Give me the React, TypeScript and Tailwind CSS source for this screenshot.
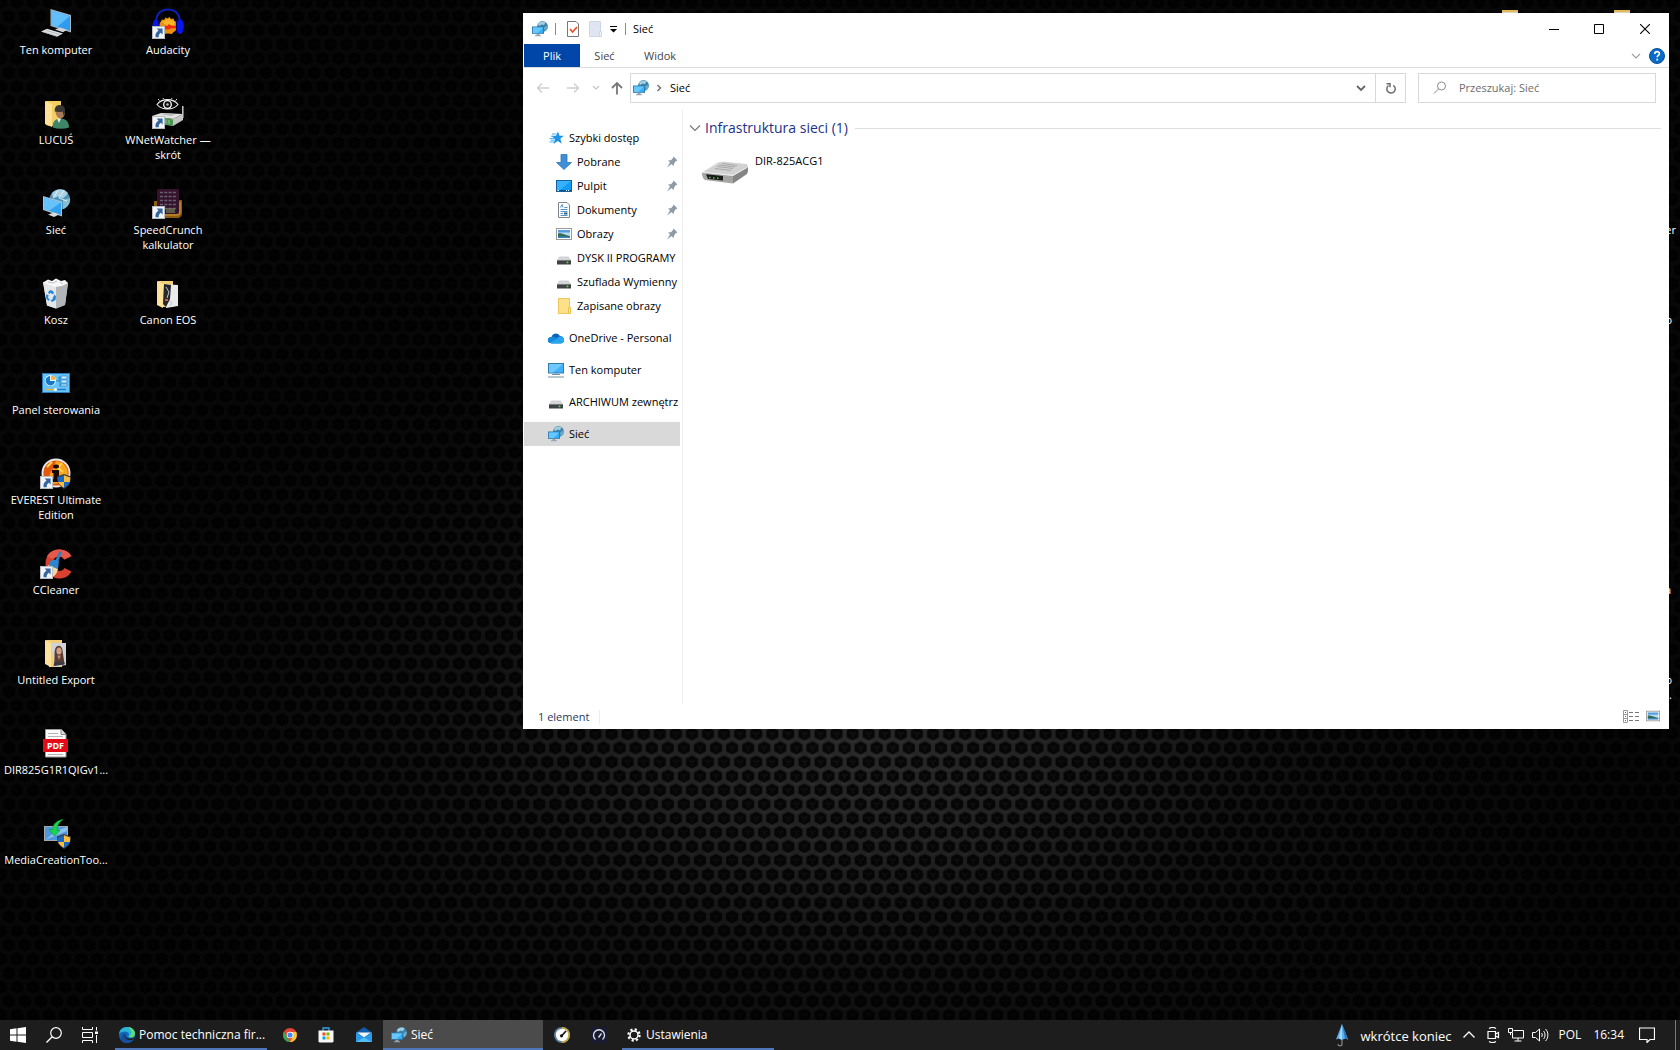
import React from "react";

type Art = { className?: string };

/* ---------- shared drawings ---------- */

function ShortcutArrow() {
  return (
    <g>
      <rect x="0.5" y="18.5" width="12" height="12" fill="#f2f4f7" stroke="#b9bcc2" />
      <path d="M4.6 20.6h6v6l-1.9-1.8c-1.6 1.2-2.2 2.6-1.9 4.4H3.6c-.6-2.7.4-5 2.9-6.7z" fill="#33669f" />
    </g>
  );
}

function Shield() {
  return (
    <g>
      <path d="M24 16l7 2.6c0 6-2 9.6-7 12.4-5-2.8-7-6.400-7-12.400z" fill="#3b3f46" />
      <path d="M24 17.300v6.700h-5.900c-.2-1.400-.3-3-.2-4.500z" fill="#1869c4" />
      <path d="M24 17.300l6.100 2.200c.1 1.500 0 3.100-.3 4.500H24z" fill="#fbbd3a" />
      <path d="M18.100 24H24v5.700c-3.200-1.600-5-3.400-5.900-5.700z" fill="#fbbd3a" />
      <path d="M24 24h5.800c-.8 2.300-2.600 4.100-5.800 5.700z" fill="#1869c4" />
    </g>
  );
}

function NetworkIcon({ className = "size-4" }: Art) {
  return (
    <svg viewBox="0 0 16 16" className={className} aria-hidden="true">
      <circle cx="10.500" cy="5.500" r="5.400" fill="#3f84ad" />
      <path d="M6 3c1.500-2.400 5.300-3.300 7.500-1.700L12 4 9.500 3.500 7 5z" fill="#a4d0e2" />
      <path d="M12 6.500l3.600-2c.6 2.400-.8 4.900-2.600 5.900z" fill="#6caccb" />
      <path d="M0 5.500h12v7.300H0z" fill="#2f76a5" />
      <path d="M.9 6.400h10.200v5.500H.9z" fill="#35b1fa" />
      <path d="M.9 6.400h10.200l-5.600 5.500H.9z" fill="#67c8ff" />
      <path d="M4.500 12.800h3v1.500h-3zM3 14.300h6v1H3z" fill="#8fa5b5" />
    </svg>
  );
}

function PictureIcon({ className = "size-4" }: Art) {
  return (
    <svg viewBox="0 0 16 16" className={className} aria-hidden="true">
      <rect x="0.500" y="2.500" width="15" height="11" fill="#fff" stroke="#9a9a9a" />
      <rect x="2" y="4" width="12" height="8" fill="#b9dcf5" />
      <path d="M2 4h12v2.500H2z" fill="#5a9ee2" />
      <path d="M2 7.500c3-.8 5 .8 12 2.500v1H2z" fill="#2f6d57" />
      <path d="M2 10.500h12V12H2z" fill="#3f82bc" />
    </svg>
  );
}

function DriveIcon() {
  return (
    <svg viewBox="0 0 16 16" className="size-4" aria-hidden="true">
      <path d="M3.500 6.500h9L15 10H1z" fill="#d2d4d6" />
      <path d="M1 10h14v4.500H1z" fill="#3f4243" />
      <path d="M1 10h14v.8H1z" fill="#84888a" />
      <circle cx="11.500" cy="12.400" r="0.900" fill="#3ff047" />
    </svg>
  );
}

/* ---------- desktop icons, 32px ---------- */

function Big({ children }: { children: React.ReactNode }) {
  return (
    <svg viewBox="0 0 32 32" className="size-8 shrink-0" aria-hidden="true">
      {children}
    </svg>
  );
}

const ComputerArt = () => (
  <Big>
    <path d="M10.500 1l20.500 6v17.500L10.500 18z" fill="#a9b4bd" />
    <path d="M11.500 2.500L30 7.900v14.900l-18.500-5.600z" fill="#2d9bf0" />
    <path d="M11.500 2.500L30 7.900 17 18.900l-5.500-1.700z" fill="#62bdfb" />
    <path d="M15 21.500l5-2 7 2.300-4 2.500z" fill="#cfd4d8" />
    <path d="M1 23.500l6-2.700L23 25.500l-6 3.300z" fill="#dfe2e5" />
    <path d="M3 24l14 4M6 22.500l14 4" stroke="#a4a9ad" strokeWidth="0.700" />
  </Big>
);

const AudacityArt = () => (
  <Big>
    <path d="M6.500 17l2-3 1.500-2.500 2 .5 1.500-2.500 2 1 2-1.500 1.500 2 2.500-.5 1 2.500 2.500 1v6l-1.500 3-2 1-1.500 2-4-.5-4 .5-3-2z" fill="#e8920f" />
    <path d="M10 14l6-3 6 2 1 4-7 2z" fill="#fbb52a" />
    <path d="M10 19l3-1.500 2 .5 2-2 2 1.500 5 .5v2l-5 .5-3 1-4-.5z" fill="#f22b0c" />
    <path d="M4.500 16C3 6 9 1.500 16 1.500S29 6 27.500 16" fill="none" stroke="#0b1fb8" strokeWidth="2" />
    <ellipse cx="3.800" cy="18.500" rx="3.300" ry="7" fill="#0a16e6" />
    <ellipse cx="28.200" cy="18.500" rx="3.600" ry="7.500" fill="#0a16e6" />
    <path d="M7 12v13M24.500 12v13" stroke="#050a70" strokeWidth="1.200" />
    <ShortcutArrow />
  </Big>
);

const UserFolderArt = () => (
  <Big>
    <path d="M6 3h15v25H10l-4-1z" fill="#f4cd63" />
    <path d="M5 3l7 3v23l-7-3z" fill="#fde196" />
    <path d="M12.500 29.500c0-6 3-9 8-9s8.500 3 8.500 9c-5 1.600-11 1.600-16.500 0z" fill="#3f8668" />
    <path d="M17 20.500l2 4.500 2-4.500z" fill="#e9eee9" />
    <path d="M15.500 13c0-3 2-4 4.500-4s5 1.500 5 5-2 6.500-4.500 6.500-5-3-5-7.500z" fill="#a87a58" />
    <path d="M14.800 13.500c-.5-4.500 2-6.500 5-6.500 4 0 6 3 5.200 7.500-.3 1.500-.8 2.500-1.500 3l-1-4c-2.500.8-5.200.5-7.700 0z" fill="#3a3634" />
  </Big>
);

const WNetArt = () => (
  <Big>
    <path d="M5 6.500c5-6.500 16-6.500 21 0-5 6-16 6-21 0z" fill="#0b0b0b" stroke="#f4f4f4" strokeWidth="1.100" />
    <circle cx="15.500" cy="6.500" r="3.800" fill="none" stroke="#fff" strokeWidth="1.300" />
    <circle cx="15.500" cy="6.500" r="1.300" fill="#bbb" />
    <path d="M7.500 2.500L6 1M11.500 1L11 0M19.500 1l.5-1M23.500 2.500L25 1" stroke="#ddd" />
    <path d="M30.800 8v12" stroke="#d5d5d5" strokeWidth="1.400" />
    <path d="M0 18l9-3 22 1-10 5z" fill="#e2e2e2" />
    <path d="M8 16l4-.8 12 .8-5 2z" fill="#b8bdb8" />
    <path d="M0 18l21 3v7L0 25z" fill="#93a893" />
    <path d="M21 21l10-5v6l-10 6z" fill="#c4c7c4" />
    <path d="M12 20l9 1.500v6l-9-1z" fill="#4a9650" />
    <path d="M14 21.500v4M17 22v4" stroke="#a8d5a8" strokeWidth="0.800" />
    <ShortcutArrow />
  </Big>
);

const GlobeArt = () => (
  <Big>
    <circle cx="19.700" cy="11.500" r="10.300" fill="#4f93b7" />
    <path d="M12 5.500c5-6 13-5 16 0l-5 5-5-2-5 2z" fill="#a8d2e2" />
    <path d="M23 12l7-2c1 5-3 10-7 11z" fill="#86bdd4" />
    <path d="M18 2l-4 7M24 2l-5 8 8 3" stroke="#e6f4f8" strokeWidth="0.900" fill="none" />
    <path d="M3 8l19 5.500v15L3 22z" fill="#b0c3cf" />
    <path d="M4 9.400l17 5v12.500L4 21z" fill="#33a3ee" />
    <path d="M4 9.400l17 5L9 22.700 4 21z" fill="#67c1fa" />
    <path d="M8 26.500l6-2 5 2-5 2.500z" fill="#d8dcdf" />
  </Big>
);

const SpeedCrunchArt = () => (
  <Big>
    <path d="M2 13l28-1v13c0 3-2 5-5 5H8c-4 0-6-2-6-5z" fill="#8e5d14" />
    <path d="M28 14v9c0 3-1 4-4 4H13" fill="none" stroke="#c18a2a" strokeWidth="1.500" />
    <rect x="5" y="1" width="22" height="25" rx="2" fill="#35132a" />
    <path d="M8 4.500h16M8 8.500h16M8 12.500h16M8 16.500h16M8 20.500h16" stroke="#675f78" strokeWidth="1.300" strokeDasharray="3 1.300" />
    <path d="M14 20h9v5h-9z" fill="#6d7758" opacity="0.700" />
    <ShortcutArrow />
  </Big>
);

const BinArt = () => (
  <Big>
    <path d="M3 4l25 1-3 22-9 3.500-9-3z" fill="#c9cccf" />
    <path d="M3 4l13 3v23.500L7 27.500z" fill="#e4e6e8" />
    <path d="M16 7l12-2-3 22-9 3.500z" fill="#b1b5b8" />
    <path d="M3 4.500l5-3 4 1.500 4-2.500 5 2.500 4-1 3 3-6 3-7 1z" fill="#f7f7f7" />
    <path d="M8 4l5 1 4-2M20 4l3 2" stroke="#bfc2c5" fill="none" />
    <path d="M8 14.500l2-2.500 3 1 1 2.500-2 .5-1.500-1.500-1 1.800zM6 16.500l2.500.5-.5 3 1.500 1-.5 2-2.700-2zM14.500 16.500l1.500 2-.5 3.500-3.500 2-1.500-2 2-.5.500-2z" fill="#1b84dc" />
  </Big>
);

const CanonArt = () => (
  <Big>
    <path d="M6 3h15v26H9z" fill="#f2cf77" />
    <path d="M11 6l15 1v21l-12 2z" fill="#e9eaec" />
    <path d="M12 6l7 1-1 14-4 8-3-3z" fill="#26282b" />
    <path d="M14 9l3 5-2 6M17 23l3 2-2 3" stroke="#bfc4c6" fill="none" />
    <path d="M13 21h3v2h-3z" fill="#d55545" />
    <path d="M5 3l6 3v24l-6-3z" fill="#fde29b" />
  </Big>
);

const PanelArt = () => (
  <Big>
    <rect x="2.500" y="5.500" width="27" height="19" fill="#66c4f9" stroke="#2a79ba" />
    <circle cx="10.500" cy="12.500" r="5.500" fill="#e8f6ff" />
    <path d="M10 8v5h5a4.700 4.700 0 1 1-5-5z" fill="#1578c8" />
    <path d="M11.200 7.500a4.500 4.500 0 0 1 4.300 4.300h-4.300z" fill="#f7ad2c" />
    <path d="M16 13h3V9h3M20 9.500v9" stroke="#2d82bf" fill="none" />
    <path d="M21 8h6v3h-6zM21 12h6v3h-6zM21 16h6v2h-6z" fill="#c9ebfd" stroke="#2d82bf" strokeWidth="0.700" />
    <path d="M6 21.500h9" stroke="#f7ad2c" strokeWidth="1.300" />
    <path d="M15 21.500h11" stroke="#1b77bd" strokeWidth="1.300" />
    <circle cx="15.500" cy="21.500" r="1.600" fill="#fff" />
  </Big>
);

const EverestArt = () => (
  <Big>
    <circle cx="16" cy="15" r="14.500" fill="#e9e9e9" />
    <circle cx="16" cy="15" r="12.600" fill="#e2580d" />
    <path d="M16 3a12 12 0 0 1 11 16l-7 6-8 1c-5-6-2-12 1-15z" fill="#f9a51c" />
    <path d="M12 4l-5 5M22 5l-4 5 5 4" stroke="#fcd55a" strokeWidth="2" fill="none" />
    <ellipse cx="16" cy="8.500" rx="3" ry="2" fill="#1d0904" />
    <path d="M12 12h7v9h2v3h-9v-3h1.500v-6H12z" fill="#1d0904" />
    <ShortcutArrow />
    <Shield />
  </Big>
);

const CCleanerArt = () => (
  <Big>
    <path d="M31.500 8A14 14 0 0 0 19 1.500C11 1.500 5.500 8 5.500 15.500S11 30.500 19 30.500c6 0 10-2.500 12.500-7l-7-3.500c-1 2-3 3-5 3-4 0-6.500-3-6.500-7.500s2.500-7 6.500-7c2.500 0 4 1 5 3z" fill="#d8402f" />
    <path d="M31.500 8A14 14 0 0 0 19 1.500c-6 0-10 3-12 7l6 2.500c1.500-2 3.500-2.700 6-2.600 2.500.1 4 1.100 5 3z" fill="#e6594a" />
    <path d="M19.500 3l2.500 1-4 10-3-1z" fill="#2f7ec0" />
    <path d="M9 15c3-4 6-4 10-2l-1 8-9-3z" fill="#2b86cf" />
    <path d="M8 17l10 4c-1 5-4 8-8 9-2-1-3-3-4-6z" fill="#f2d8a8" />
    <ShortcutArrow />
  </Big>
);

const ExportArt = () => (
  <Big>
    <path d="M6 2h16v27H9z" fill="#f2cf77" />
    <path d="M11 5h15v22l-12 2z" fill="#cfd2d6" />
    <path d="M15.500 10c2.500-4 6.500-2 7 2 .4 5 1.500 9 2 14l-11 1.500c2-6 0-12.500 2-17.500z" fill="#5b3b32" />
    <ellipse cx="19" cy="13" rx="2.600" ry="3.600" fill="#cf9f88" />
    <path d="M17 17.500l2 4.500 2-4.500z" fill="#b98673" />
    <path d="M14 25l4-1.500 6.500 1v2L14 28z" fill="#3a3a42" />
    <path d="M5 2l6 3v24l-6-3z" fill="#fde29b" />
  </Big>
);

const PdfArt = () => (
  <Big>
    <path d="M5.500 1.500h16l4.500 5v22.500H5.500z" fill="#fafafa" stroke="#9b9b9b" />
    <path d="M21 1.500v5h5" fill="#dcdcdc" stroke="#8b8b8b" />
    <path d="M8 5.500h10M8 8.500h15M8 26.500h15" stroke="#b5b5b5" />
    <rect x="3" y="11" width="25" height="13" fill="#e30b17" />
    <text x="15.500" y="21" textAnchor="middle" fontSize="9" fontWeight="700" fill="#fff" fontFamily="Noto Sans, sans-serif">PDF</text>
  </Big>
);

const MediaArt = () => (
  <Big>
    <rect x="4.500" y="8.500" width="23" height="14" fill="#4f97dc" stroke="#a3a9ad" />
    <path d="M5 22l11-9 11-4v4z" fill="#8cc0ef" />
    <path d="M23 1.500c-5 .5-10 4-10.500 10H9l5.500 6.500 5.500-5.500h-3c0-5 2-8.500 6-11z" fill="#17d64d" stroke="#0d9a35" strokeWidth="0.600" />
    <Shield />
  </Big>
);

const desktopItems: { lines: string[]; Art: () => React.ReactElement }[] = [
  { lines: ["Ten komputer"], Art: ComputerArt },
  { lines: ["LUCUŚ"], Art: UserFolderArt },
  { lines: ["Sieć"], Art: GlobeArt },
  { lines: ["Kosz"], Art: BinArt },
  { lines: ["Panel sterowania"], Art: PanelArt },
  { lines: ["EVEREST Ultimate", "Edition"], Art: EverestArt },
  { lines: ["CCleaner"], Art: CCleanerArt },
  { lines: ["Untitled Export"], Art: ExportArt },
  { lines: ["DIR825G1R1QIGv1..."], Art: PdfArt },
  { lines: ["MediaCreationToo..."], Art: MediaArt },
  { lines: ["Audacity"], Art: AudacityArt },
  { lines: ["WNetWatcher —", "skrót"], Art: WNetArt },
  { lines: ["SpeedCrunch", "kalkulator"], Art: SpeedCrunchArt },
  { lines: ["Canon EOS"], Art: CanonArt },
];

/* ---------- wallpaper ---------- */

function Wallpaper() {
  return (
    <svg className="absolute inset-0 h-full w-full" aria-hidden="true">
      <defs>
        <pattern id="comb" x="708" y="762" width="16.070" height="28.140" patternUnits="userSpaceOnUse">
          <rect width="17" height="29" fill="#292929" />
          <g id="cell">
            <path d="M0-6.500L6-3.300V3.300L0 6.500-6 3.300V-3.300z" fill="#070707" />
            <path d="M-3-1.500L0 0l3-1.500M0 0v4" stroke="#161616" fill="none" />
          </g>
          <use href="#cell" x="16.070" />
          <use href="#cell" y="28.140" />
          <use href="#cell" x="16.070" y="28.140" />
          <use href="#cell" x="8.030" y="14.070" />
          <path d="M-3 7l3 1.500L3 7M13 7l3 1.500L19 7M5 21l3 1.500L11 21" stroke="#3a3a3a" fill="none" strokeWidth="0.800" />
        </pattern>
        <radialGradient id="dim" gradientUnits="userSpaceOnUse" cx="860" cy="1220" r="800" gradientTransform="scale(1 0.600)">
          <stop offset="0" stopColor="#000" stopOpacity="0" />
          <stop offset="0.250" stopColor="#000" stopOpacity="0.200" />
          <stop offset="0.500" stopColor="#000" stopOpacity="0.580" />
          <stop offset="0.750" stopColor="#000" stopOpacity="0.760" />
          <stop offset="1" stopColor="#000" stopOpacity="0.840" />
        </radialGradient>
      </defs>
      <rect width="100%" height="100%" fill="url(#comb)" />
      <rect width="100%" height="100%" fill="url(#dim)" />
    </svg>
  );
}

/* ---------- explorer window ---------- */

const Star = () => (
  <svg viewBox="0 0 16 16" className="size-4" aria-hidden="true">
    <path d="M10 1.500l1.500 4.200 4.300.1-3.500 3 1.400 4.900L9.800 11 5.500 14l1.500-5-3.500-3 4.600-.3z" fill="#1d95e6" />
    <path d="M4 4h4.500M1.500 8.500H7M1.500 12H6M3 6.200h3M2.500 10.200h4" stroke="#3aa8f0" strokeWidth="0.900" />
  </svg>
);
const Down = () => (
  <svg viewBox="0 0 16 16" className="size-4" aria-hidden="true">
    <path d="M5 .5h6v8h4.500L8 15.500.5 8.500H5z" fill="#3c8fd8" stroke="#2e79bb" strokeWidth="0.800" />
  </svg>
);
const DeskIcon = () => (
  <svg viewBox="0 0 16 16" className="size-4" aria-hidden="true">
    <rect x="0.500" y="2.500" width="15" height="11" fill="#139bf4" stroke="#17629c" />
    <path d="M1 3h14L4 12H1z" fill="#36b0ff" />
    <path d="M1 12.500h14" stroke="#0f4d80" />
    <path d="M1.500 12.500h1.500M10 12.500h1M12 12.500h1" stroke="#fff" />
  </svg>
);
const Doc = () => (
  <svg viewBox="0 0 16 16" className="size-4" aria-hidden="true">
    <path d="M2.500.5h8.500l2.500 2.500v12.500h-11z" fill="#fff" stroke="#7d868c" />
    <path d="M4.500 5.500l1.500-3 1 3M8.500 5.500h3M4.500 7.500h7M4.500 9.500h7M4.500 11.500h2.500M4.500 13.500h7" stroke="#3a86c6" fill="none" strokeWidth="0.900" />
    <path d="M8 10.500h3.500v2H8z" fill="#2a638f" />
  </svg>
);
const Folder = () => (
  <svg viewBox="0 0 16 16" className="size-4" aria-hidden="true">
    <rect x="2.500" y="0.500" width="11" height="15" fill="#ffe08a" stroke="#edc75c" />
    <path d="M12.500 9.500h2v6h-2z" fill="#ffe9ae" stroke="#e9c04e" />
  </svg>
);
const Cloud = () => (
  <svg viewBox="0 0 16 16" className="size-4" aria-hidden="true">
    <path d="M3.500 7C4.500 3 9.500 2 12 6c2.500 0 4 1.800 4 4s-1.300 3.300-3 3.300H3.500C1.300 13.300 0 12 0 10.200 0 8.200 1.500 7 3.500 7z" fill="#0c64b8" />
    <path d="M12 6.300c2.500 0 4 1.600 4 3.700s-1.300 3.300-3 3.300H3.500L9 8z" fill="#2aa5ef" />
    <path d="M3.500 7c2-.4 3.500.2 5 1.200l5.500 4.500-1 .6H3.500C1.300 13.300 0 12 0 10.200 0 8.200 1.500 7 3.500 7z" fill="#1589dc" />
    <path d="M2 12.800l7-3.800 5.500 3.900-1.500.4H3.500z" fill="#28a8ec" />
  </svg>
);
const Pc = () => (
  <svg viewBox="0 0 16 16" className="size-4" aria-hidden="true">
    <rect x="0.500" y="1.500" width="15" height="9.500" fill="#3fb2fb" stroke="#347aa8" />
    <path d="M1 2h14L5 10.500H1z" fill="#6fc9ff" />
    <path d="M6 11.500h4v1H6z" fill="#8fa5b5" />
    <path d="M4 12.500h8M0 15h16" stroke="#7990a0" />
  </svg>
);
const Pin = () => (
  <svg viewBox="0 0 12 12" className="size-3" aria-hidden="true">
    <path d="M7.500.5L11.500 4.500 10 5 8 7.500v2.500L5.500 8 1 11.500 4 6.500 2 4.500l3-.3L7 2z" fill="#8d99a5" />
  </svg>
);

type NavEntry = { label: string; Icon: (p: Art) => React.ReactElement; child?: boolean; pin?: boolean; gap?: boolean; active?: boolean };

const navEntries: NavEntry[] = [
  { label: "Szybki dostęp", Icon: Star },
  { label: "Pobrane", Icon: Down, child: true, pin: true },
  { label: "Pulpit", Icon: DeskIcon, child: true, pin: true },
  { label: "Dokumenty", Icon: Doc, child: true, pin: true },
  { label: "Obrazy", Icon: PictureIcon, child: true, pin: true },
  { label: "DYSK II PROGRAMY", Icon: DriveIcon, child: true },
  { label: "Szuflada Wymienny", Icon: DriveIcon, child: true },
  { label: "Zapisane obrazy", Icon: Folder, child: true },
  { label: "OneDrive - Personal", Icon: Cloud, gap: true },
  { label: "Ten komputer", Icon: Pc, gap: true },
  { label: "ARCHIWUM zewnętrz", Icon: DriveIcon, gap: true },
  { label: "Sieć", Icon: NetworkIcon, gap: true, active: true },
];

function NavRow({ label, Icon, child, pin, gap, active }: NavEntry) {
  return (
    <li className={gap ? "mt-2" : ""}>
      <button
        type="button"
        className={`flex h-6 w-full items-center gap-[5px] overflow-hidden text-left whitespace-nowrap ${child ? "pl-8" : "pl-6"} ${active ? "bg-[#d9d9d9]" : ""}`}
      >
        <span className="shrink-0">
          <Icon />
        </span>
        <span className={pin ? "min-w-0 flex-1" : ""}>{label}</span>
        {pin && (
          <span className="mr-0.5 shrink-0">
            <Pin />
          </span>
        )}
      </button>
    </li>
  );
}

function Explorer() {
  return (
    <section
      aria-label="Sieć"
      className="absolute top-[13px] right-[11px] left-[523px] flex h-[716px] flex-col bg-white pl-px text-[11px] leading-4 text-black"
    >
      <header className="flex h-[31px] shrink-0 items-center">
        <div className="flex flex-1 items-center pl-2">
          <NetworkIcon />
          <span className="ml-[7px] h-3 w-px bg-[#8a8a8a]" />
          <button type="button" aria-label="Właściwości" className="ml-[9px]">
            <svg viewBox="0 0 16 16" className="size-4">
              <path d="M2.500.5h8.500l2.500 2.500v12.500h-11z" fill="#fff" stroke="#777" />
              <path d="M5 8l2.500 3L12 6" fill="none" stroke="#ea4a1c" strokeWidth="1.600" />
            </svg>
          </button>
          <button type="button" aria-label="Nowy folder" className="ml-[7px]">
            <svg viewBox="0 0 16 16" className="size-4">
              <path d="M1.500.5h11v15h-11z" fill="#dfe6f2" stroke="#ccd6e6" />
              <path d="M11.500 10.500h2v5h-2z" fill="#edf1f8" stroke="#ccd6e6" />
            </svg>
          </button>
          <button type="button" aria-label="Dostosuj" className="ml-[3px]">
            <svg viewBox="0 0 12 12" className="size-3">
              <path d="M3 3.500h7" stroke="#000" />
              <path d="M3 6h7L6.500 9.500z" />
            </svg>
          </button>
          <span className="ml-1.5 h-3 w-px bg-[#8a8a8a]" />
          <h1 className="ml-[7px]">Sieć</h1>
        </div>
        <div className="flex items-center self-stretch">
          <button type="button" aria-label="Minimalizuj" className="flex h-full w-[45px] items-center justify-center">
            <svg viewBox="0 0 10 10" className="size-2.5"><path d="M0 5.500h10" stroke="#000" /></svg>
          </button>
          <button type="button" aria-label="Maksymalizuj" className="flex h-full w-[45px] items-center justify-center">
            <svg viewBox="0 0 10 10" className="size-2.5"><path d="M.5.5h9v9h-9z" fill="none" stroke="#000" /></svg>
          </button>
          <button type="button" aria-label="Zamknij" className="flex h-full w-12 items-center justify-center">
            <svg viewBox="0 0 10 10" className="size-2.5"><path d="M0 0l10 10M10 0L0 10" stroke="#000" strokeWidth="1.100" /></svg>
          </button>
        </div>
      </header>

      <nav aria-label="Wstążka" className="flex h-6 shrink-0 items-stretch border-b border-[#dadbdc] text-[#444]">
        <button type="button" className="w-14 bg-[#0046a8] text-white">Plik</button>
        <button type="button" className="w-[49px]">Sieć</button>
        <button type="button" className="w-[62px]">Widok</button>
        <span className="flex-1" />
        <button type="button" aria-label="Rozwiń Wstążkę" className="mr-2">
          <svg viewBox="0 0 10 10" className="size-2.5"><path d="M1 3l4 4 4-4" fill="none" stroke="#a0a0a0" strokeWidth="1.200" /></svg>
        </button>
        <button type="button" aria-label="Pomoc" className="mr-1 flex items-center">
          <svg viewBox="0 0 16 16" className="size-4">
            <circle cx="8" cy="8" r="7.500" fill="#0a6bc9" stroke="#0a5199" />
            <path d="M5.800 6c0-3 4.600-3 4.600-.3 0 1.700-2.200 1.700-2.200 3.500M8.200 10.700v1.700" fill="none" stroke="#fff" strokeWidth="1.700" />
          </svg>
        </button>
      </nav>

      <div className="mt-[5px] flex h-[30px] shrink-0 items-stretch">
        <div className="flex w-[106px] items-center">
          <button type="button" aria-label="Wstecz" className="ml-3">
            <svg viewBox="0 0 14 14" className="size-3.5"><path d="M13 7H1.500M6 2.500L1.500 7 6 11.500" fill="none" stroke="#cfcfcf" strokeWidth="1.400" /></svg>
          </button>
          <button type="button" aria-label="Dalej" className="ml-4">
            <svg viewBox="0 0 14 14" className="size-3.5"><path d="M1 7h11.500M8 2.500L12.500 7 8 11.500" fill="none" stroke="#cfcfcf" strokeWidth="1.400" /></svg>
          </button>
          <button type="button" aria-label="Ostatnie lokalizacje" className="ml-3">
            <svg viewBox="0 0 8 8" className="size-2"><path d="M1 2l3 3 3-3" fill="none" stroke="#c4c4c4" strokeWidth="1.200" /></svg>
          </button>
          <button type="button" aria-label="W górę" className="ml-2.5">
            <svg viewBox="0 0 14 14" className="size-3.5"><path d="M7 13.500V2M2 7l5-5 5 5" fill="none" stroke="#777" strokeWidth="1.800" /></svg>
          </button>
        </div>
        <div className="flex flex-1 items-stretch border border-[#d9d9d9]">
          <button type="button" className="flex flex-1 items-center text-left">
            <span className="ml-0.5"><NetworkIcon /></span>
            <svg viewBox="0 0 8 8" className="ml-1.5 size-2"><path d="M2.500 1l3 3-3 3" fill="none" stroke="#6a6a6a" strokeWidth="1.400" /></svg>
            <span className="ml-[7px]">Sieć</span>
          </button>
          <button type="button" aria-label="Poprzednie lokalizacje" className="w-7">
            <svg viewBox="0 0 10 10" className="mx-auto size-2.5"><path d="M1 3l4 4 4-4" fill="none" stroke="#666" strokeWidth="1.800" /></svg>
          </button>
          <button type="button" aria-label="Odśwież" className="w-[30px] border-l border-[#d9d9d9]">
            <svg viewBox="0 0 12 12" className="mx-auto size-3"><path d="M8.300 3.300A4.200 4.200 0 1 1 3.500 3.500M1.500 1.800H5V5.300" fill="none" stroke="#6d6d6d" strokeWidth="1.500" /></svg>
          </button>
        </div>
        <label className="mr-[13px] ml-3 flex w-[238px] items-center border border-[#d9d9d9]">
          <svg viewBox="0 0 14 14" className="ml-3.5 size-3.5 shrink-0" aria-hidden="true"><circle cx="8.500" cy="5" r="4" fill="none" stroke="#8a8a8a" /><path d="M5.500 8L1 12.500" stroke="#8a8a8a" /></svg>
          <input type="text" aria-label="Przeszukaj: Sieć" placeholder="Przeszukaj: Sieć" className="ml-3 w-full min-w-0 bg-transparent outline-none placeholder:text-[#6d6d6d]" />
        </label>
      </div>

      <div className="mt-[7px] flex min-h-0 flex-1">
        <nav aria-label="Okienko nawigacji" className="w-[156px] shrink-0 overflow-hidden pt-4">
          <ul>
            {navEntries.map((e) => (
              <NavRow key={e.label} {...e} />
            ))}
          </ul>
        </nav>
        <main className="ml-0.5 flex-1 border-l border-[#f0f0f0]">
          <div className="mt-[7px] mr-2 flex h-[22px] items-center">
            <svg viewBox="0 0 12 12" className="ml-1.5 size-3" aria-hidden="true"><path d="M1 3.500l5 5 5-5" fill="none" stroke="#777" strokeWidth="1.200" /></svg>
            <h2 className="ml-1 text-[14px] text-[#1e3287]">Infrastruktura sieci (1)</h2>
            <span className="ml-[7px] h-px flex-1 bg-[#dfdfdf]" />
          </div>
          <button type="button" className="mt-2.5 ml-4 flex items-start text-left">
            <svg viewBox="0 0 52 34" className="mt-2.5 h-[34px] w-[52px]" aria-hidden="true">
              <path d="M3 13.500L18 4c2-1 5-1.500 8-1.300l21 2.300c2 .5 2 2 1.500 3.500L34 16z" fill="#d2d2d2" />
              <path d="M3 13L34 16.500v8L6 21c-2-.5-3.500-6-3-8z" fill="#a5a5a5" />
              <path d="M34 16.500l14.500-8.500c1 1.500.5 5.500-.5 7L34 24.500z" fill="#858585" />
              <path d="M7 15.300l17 1.700v4.500L9 20z" fill="#171c17" />
              <path d="M10 18.500h1.500M14 19h1.500M18 19.300h1.500" stroke="#4fc15a" strokeWidth="1.400" />
              <path d="M18 7.500l16 2M20 6l16 2M23 4.500l15 2M16 9.500l16 2" stroke="#a2a2a2" strokeWidth="0.900" />
              <path d="M3 13.500l15-9.500M3 13.200l31 3.300 14-8" stroke="#f1f1f1" fill="none" />
            </svg>
            <span className="ml-1 pt-1">DIR-825ACG1</span>
          </button>
        </main>
      </div>

      <footer className="flex h-[25px] shrink-0 items-center text-[#1e395b]">
        <span className="ml-3.5">1 element</span>
        <span className="ml-2.5 h-3.5 w-px bg-[#ececec]" />
        <span className="flex-1" />
        <button type="button" aria-label="Szczegóły" className="mr-[7px] mb-0.5">
          <svg viewBox="0 0 16 14" className="h-3.5 w-4">
            <path d="M.5 1.500h4v12h-4zM.5 5.500h4M.5 9.500h4" fill="none" stroke="#9a9a9a" />
            <path d="M2 3.500h1M2 7.500h1" stroke="#3a76b5" /><path d="M2 11.500h1" stroke="#c33" />
            <path d="M6 3.500h4M12 3.500h4M6 7.500h4M12 7.500h4M6 11.500h4M12 11.500h4" stroke="#777" />
          </svg>
        </button>
        <button type="button" aria-label="Duże ikony" className="mr-[9px] mb-0.5">
          <PictureIcon className="size-3.5" />
        </button>
      </footer>
    </section>
  );
}

/* ---------- taskbar ---------- */

const cell = "flex h-full w-9 items-center justify-center";

function Taskbar() {
  return (
    <footer className="relative flex h-[30px] shrink-0 items-stretch bg-[#1d1d1d] text-[12px] leading-4 whitespace-nowrap text-white">
      <button type="button" aria-label="Start" className={cell}>
        <svg viewBox="0 0 16 16" className="size-4"><path d="M0 2.200L6.500 1.300v6.200H0zM7.500 1.200L16 0v7.500H7.500zM0 8.500h6.500v6.200L0 13.800zM7.500 8.500H16V16l-8.500-1.200z" fill="#fff" /></svg>
      </button>
      <button type="button" aria-label="Wyszukaj" className={cell}>
        <svg viewBox="0 0 16 16" className="size-4"><circle cx="10" cy="6" r="5.300" fill="none" stroke="#fff" strokeWidth="1.200" /><path d="M6.200 9.800L.5 15.500" stroke="#fff" strokeWidth="1.300" /></svg>
      </button>
      <button type="button" aria-label="Widok zadań" className={cell}>
        <svg viewBox="0 0 16 16" className="size-4"><path d="M.5 0v2.500h10V0M.5 16v-2.500h10V16M.5 5.500h10v5H.5zM14.500 0v3.500M14.500 8v8" fill="none" stroke="#fff" /><path d="M13 4.500h3v2.500h-3z" fill="#fff" /></svg>
      </button>
      <button type="button" className="ml-[7px] flex w-[152px] items-center border-b-2 border-[#4f76b8] pt-0.5 pl-1">
        <svg viewBox="0 0 16 16" className="size-4" aria-hidden="true">
          <circle cx="8" cy="8" r="8" fill="#0f6cbd" />
          <path d="M0 7C.5 2.500 4 0 8 0c5 0 8 3.500 8 6.500 0 2.700-2 4-4 4-1.700 0-2.500-.8-2.500-1.500 0-.6.500-.8.500-1.700C10 5.500 8 4.500 6 4.500 3 4.500.8 5.500 0 7z" fill="#2ab5d8" />
          <path d="M9 .1c4.500.4 7 3.700 7 6.400 0 2.700-2 4-4 4-1.700 0-2.500-.8-2.500-1.500 2 .3 3.500-2 2.500-4.500C11.400 2.600 10.300 1 9 .1z" fill="#5fdc74" />
          <path d="M5.500 8c0 3.500 3.500 6 7.500 5-3 4-9 3.500-11 0C.7 10.500 3 6 7 6c-1 .5-1.500 1-1.500 2z" fill="#1a4e9c" />
          <path d="M6.500 7.500c-.5 2.500 1.500 4.300 5 4 1.500-.2 2.500-.5 3.300-1 .3.800-.6 2-1.800 2.500-4 1-7.500-1.500-7.500-5z" fill="#1d1d1d" />
        </svg>
        <span className="ml-1">Pomoc techniczna fir...</span>
      </button>
      <button type="button" aria-label="Chrome" className="ml-[5px] flex w-9 items-center justify-center">
        <svg viewBox="0 0 16 16" className="size-3.5">
          <circle cx="8" cy="8" r="8" fill="#e64235" />
          <path d="M1 4l4 7 3 5C3 16 0 12 0 8c0-1.500.4-2.900 1-4z" fill="#33a853" />
          <path d="M8 4.500h7.200C17 9 14.500 16 8 16l3.300-6z" fill="#fcc934" />
          <circle cx="8" cy="8" r="3.800" fill="#fff" /><circle cx="8" cy="8" r="2.900" fill="#4688f4" />
        </svg>
      </button>
      <button type="button" aria-label="Sklep" className={cell}>
        <svg viewBox="0 0 16 16" className="size-4">
          <path d="M5 4V1h6v3" fill="none" stroke="#2fa4e8" strokeWidth="1.300" />
          <path d="M.5 3.500h15v11l-1 1h-13l-1-1z" fill="#f6f6f6" />
          <path d="M4.500 5.500h3v3h-3z" fill="#f05023" /><path d="M8.500 5.500h3v3h-3z" fill="#7eba02" /><path d="M4.500 9.500h3v3h-3z" fill="#02a4ef" /><path d="M8.500 9.500h3v3h-3z" fill="#ffb901" />
        </svg>
      </button>
      <button type="button" aria-label="Poczta" className="flex w-[39px] items-center justify-center">
        <svg viewBox="0 0 16 16" className="size-4"><path d="M0 5.500L8 0l8 5.500V15H0z" fill="#0f5cab" /><path d="M1 5.500h14L8 10.500z" fill="#f1f6fb" /><path d="M0 5.500l8 5 8-5V15H0z" fill="#2a9be8" /><path d="M0 15l8-4.500 8 4.500z" fill="#53bdf5" /></svg>
      </button>
      <button type="button" className="flex w-40 items-center border-b-2 border-[#4f76b8] bg-[#4b4b4b] pt-0.5 pl-2">
        <NetworkIcon />
        <span className="ml-1">Sieć</span>
      </button>
      <button type="button" aria-label="Zegar" className="ml-px flex w-9 items-center justify-center">
        <svg viewBox="0 0 16 16" className="size-4"><circle cx="8" cy="8" r="8" fill="#5a7f9a" /><path d="M8 0a8 8 0 0 1 0 16z" fill="#c4a640" /><circle cx="8" cy="8" r="6.200" fill="#fbfbfb" /><path d="M7.500 9L12 4" stroke="#111" strokeWidth="1.600" /><circle cx="7.500" cy="8.800" r="1.600" fill="#111" /></svg>
      </button>
      <button type="button" aria-label="Speedtest" className="flex w-[38px] items-center justify-center">
        <svg viewBox="0 0 16 16" className="size-4"><path d="M0 0h16v16H0z" fill="#181b32" /><path d="M4.500 12.500a5.500 5.500 0 1 1 7 0M7.500 10.500l3-4" fill="none" stroke="#dfe0e6" strokeWidth="1.300" /></svg>
      </button>
      <button type="button" className="ml-1 flex w-[152px] items-center border-b-2 border-[#4f76b8] pt-0.5 pl-[5px]">
        <svg viewBox="0 0 14 14" className="size-3.5" aria-hidden="true">
          <circle cx="7" cy="7" r="5.600" fill="none" stroke="#fff" strokeWidth="2.200" strokeDasharray="2.200 2.198" />
          <circle cx="7" cy="7" r="4" fill="none" stroke="#fff" strokeWidth="1.500" />
        </svg>
        <span className="ml-[5px]">Ustawienia</span>
      </button>

      <span className="flex-1" />

      <button type="button" className="flex items-center text-[13px]">
        <svg viewBox="0 0 14 24" className="h-6 w-3.5" aria-hidden="true">
          <path d="M7 1L1 16.500l3-1 3 1.500 3-1.500 3 1z" fill="#5eb0ee" />
          <path d="M7 1L4 15.500 7 17z" fill="#a4d8fb" /><path d="M7 1l6 15.500-3-1z" fill="#2c76be" />
          <path d="M7 16.500v5c0 2-4 2-4-.5" fill="none" stroke="#8a8a8a" strokeWidth="1.200" />
        </svg>
        <span className="ml-3 pt-0.5">wkrótce koniec</span>
      </button>
      <button type="button" aria-label="Pokaż ukryte ikony" className="ml-2.5 flex items-center">
        <svg viewBox="0 0 14 14" className="size-3.5"><path d="M1.500 9.500L7 4l5.500 5.500" fill="none" stroke="#fff" strokeWidth="1.300" /></svg>
      </button>
      <button type="button" aria-label="Rozpocznij spotkanie" className="ml-2.5 flex items-center">
        <svg viewBox="0 0 14 16" className="h-4 w-3.5"><path d="M3 1.500c2-1.300 5-1.300 7 0M3 14.500c2 1.300 5 1.300 7 0M2 4.500h7.500v7H2zM9.500 7l3-1.500v5L9.500 9" fill="none" stroke="#fff" strokeWidth="1.200" /></svg>
      </button>
      <button type="button" aria-label="Sieć przewodowa" className="ml-2 flex items-center">
        <svg viewBox="0 0 16 16" className="size-4"><path d="M5.500 3.500h10v7.500h-11V6M10 11v3M6.500 14h7M.5 1.500h4v4h-4zM2.500 5.500V8" fill="none" stroke="#fff" /></svg>
      </button>
      <button type="button" aria-label="Głośność" className="ml-2 flex items-center">
        <svg viewBox="0 0 17 16" className="h-4 w-[17px]"><path d="M.5 5.500h3l4-3.500v12l-4-3.500h-3zM9.500 6c1 1 1 3 0 4M11.500 4c2 2 2 6 0 8M13.500 2c3.200 3.300 3.200 8.700 0 12" fill="none" stroke="#fff" /></svg>
      </button>
      <button type="button" className="ml-2.5">POL</button>
      <time className="ml-3 self-center">16:34</time>
      <button type="button" aria-label="Centrum akcji" className="mr-5 ml-[15px] flex items-center">
        <svg viewBox="0 0 16 16" className="size-4"><path d="M.5 1h15v11.500H11L8 15.500 8 12.500H.5z" fill="none" stroke="#fff" strokeWidth="1.200" /></svg>
      </button>
      <button type="button" aria-label="Pokaż pulpit" className="w-[5px] border-l border-[#7a7a7a]" />
    </footer>
  );
}

/* Labels and folder tops that stick out from behind the window */
function PeekingItems() {
  return (
    <div className="absolute inset-y-0 right-0 w-[180px] text-[11px] leading-4 text-white" aria-hidden="true">
      <span className="absolute top-[10px] right-[162px] h-4 w-4 border-t-2 border-[#e3b95c] bg-[#d8d2c4]" />
      <span className="absolute top-[10px] right-[50px] h-4 w-4 border-t-2 border-[#e3b95c] bg-[#d8d2c4]" />
      <span className="absolute top-[222px] right-1">er</span>
      <span className="absolute top-[312px] right-2">o</span>
      <span className="absolute top-[582px] right-[9px]">a</span>
      <span className="absolute top-[672px] right-2">o</span>
      <span className="absolute top-[687px] right-2">.</span>
    </div>
  );
}

export default function App() {
  return (
    <div className="flex h-screen w-full flex-col overflow-hidden bg-black font-['Open_Sans','Noto_Sans',sans-serif]">
      <div className="relative min-h-0 flex-1">
        <Wallpaper />
        <PeekingItems />
        <div className="relative grid w-max auto-cols-[112px] grid-flow-col grid-rows-[repeat(10,90px)]">
          {desktopItems.map(({ lines, Art }) => (
            <button
              key={lines.join(" ")}
              type="button"
              className="flex flex-col items-center pt-2 text-[11px] leading-[15px] whitespace-nowrap text-white"
            >
              <Art />
              <span className="mt-0.5">
                {lines.map((l) => (
                  <span key={l} className="block">{l}</span>
                ))}
              </span>
            </button>
          ))}
        </div>
        <Explorer />
      </div>
      <Taskbar />
    </div>
  );
}
